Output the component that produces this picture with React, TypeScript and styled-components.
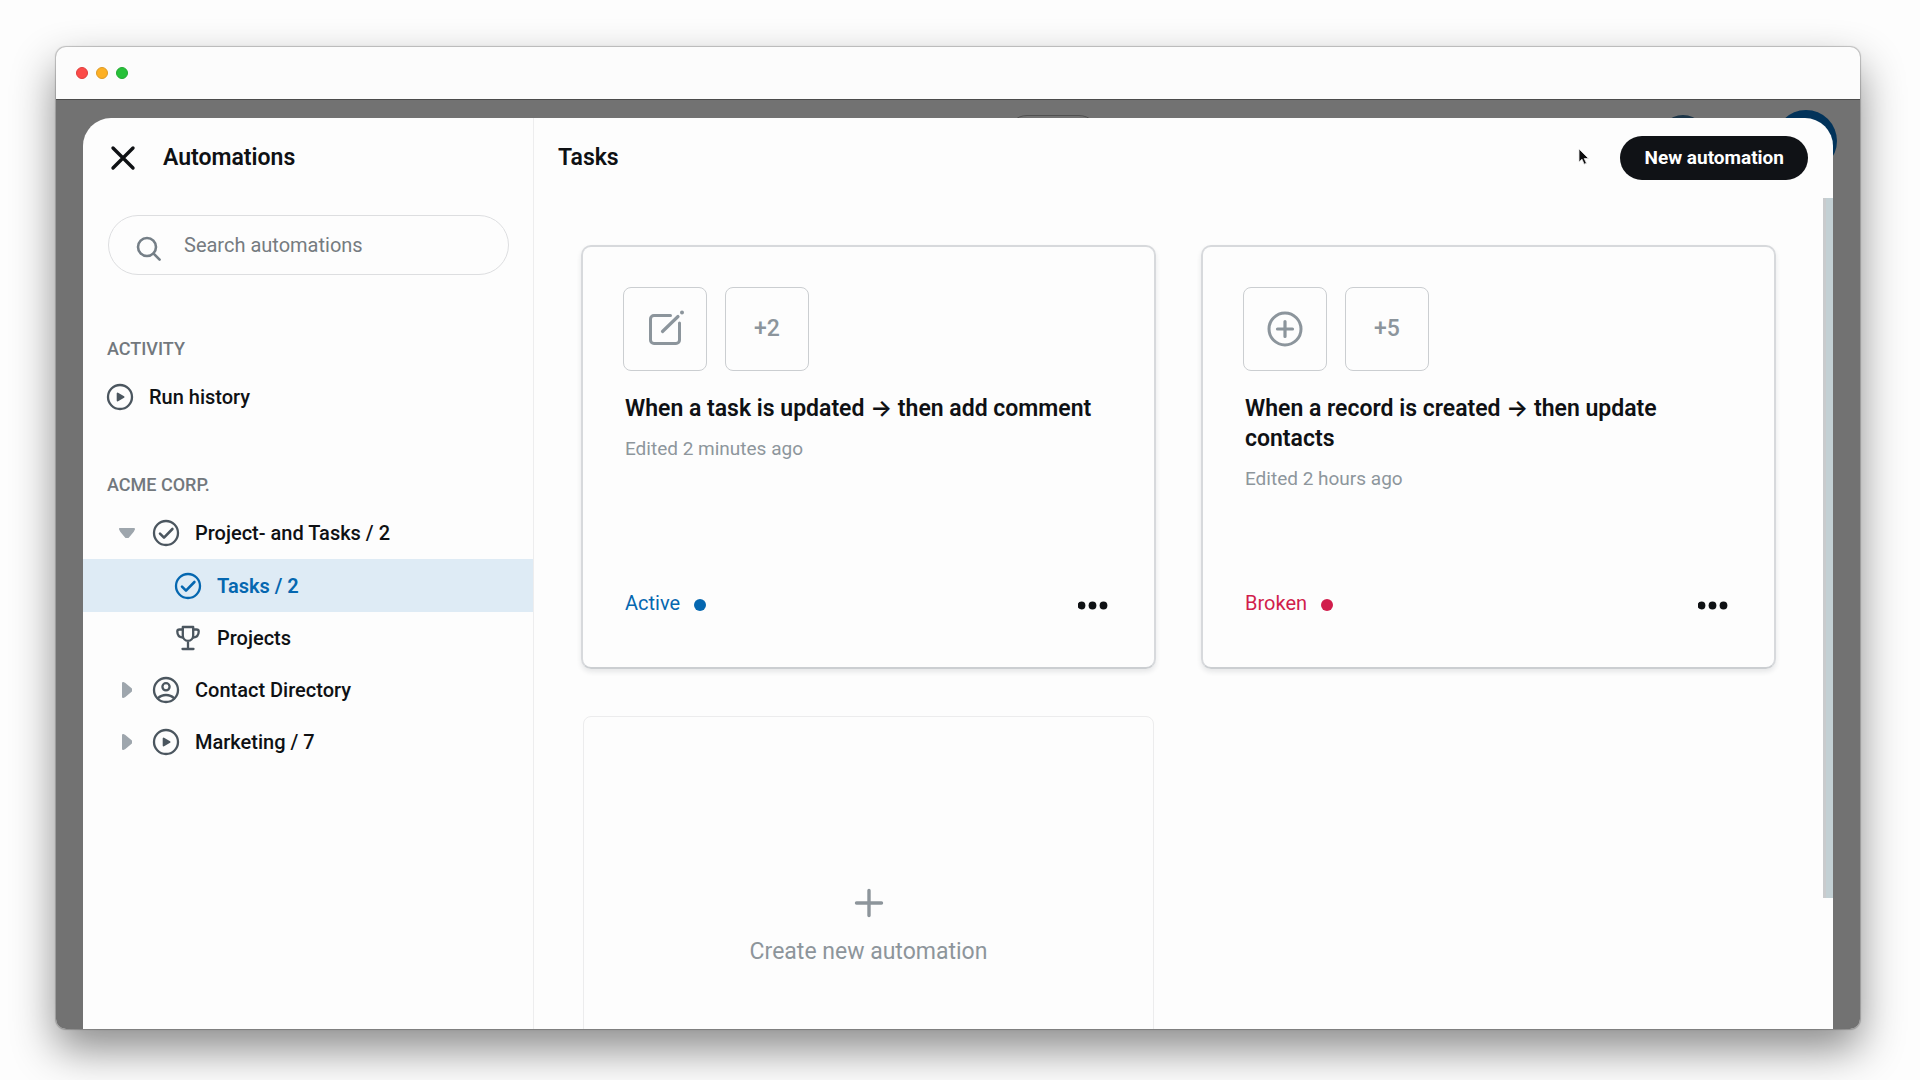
import React, { useState } from "react";
import styled, { createGlobalStyle } from "styled-components";

const GlobalStyle = createGlobalStyle`
  *, *::before, *::after { box-sizing: border-box; }
  html, body { margin: 0; min-height: 100%; background: #fdfdfd; }
  body { font-family: Roboto, Inter, "Liberation Sans", sans-serif; color: #0f1114; overflow: hidden; }
  button { font: inherit; color: inherit; background: none; border: 0; padding: 0; cursor: pointer; }
  h1, h2, h3, p, ul { margin: 0; padding: 0; font-weight: inherit; }
  ul { list-style: none; }
  svg { display: block; flex: none; }
`;

const Desktop = styled.div`
  display: flex;
  height: 100vh;
  padding: 47px 60px 51px 56px;
`;

const BrowserWindow = styled.div`
  display: flex;
  flex-direction: column;
  flex: 1;
  min-width: 0;
  overflow: hidden;
  border-radius: 10px;
  background: #fcfcfc;
  box-shadow: 0 0 1px 1px rgba(0, 0, 0, 0.22), 0 20px 44px rgba(0, 0, 0, 0.46);
`;

const TitleBar = styled.header`
  display: flex;
  align-items: center;
  gap: 8px;
  height: 53px;
  flex: none;
  padding-left: 20px;
  border-bottom: 1px solid #4b4b4b;
`;

const Light = styled.span<{ $color: string; $rim: string }>`
  width: 12px;
  height: 12px;
  border-radius: 50%;
  background: ${(p) => p.$color};
  border: 1px solid ${(p) => p.$rim};
`;

const Backdrop = styled.div`
  position: relative;
  display: flex;
  flex: 1;
  min-height: 0;
  padding: 18px 27px 0;
  background: #727272;
`;

const DimmedCircle = styled.span<{ $size: number; $top: number; $right: number; $color: string }>`
  position: absolute;
  top: ${(p) => p.$top}px;
  right: ${(p) => p.$right}px;
  width: ${(p) => p.$size}px;
  height: ${(p) => p.$size}px;
  border-radius: 50%;
  background: ${(p) => p.$color};
`;

const DimmedField = styled.span`
  position: absolute;
  top: 15px;
  left: 951px;
  width: 92px;
  height: 40px;
  border-radius: 20px;
  border: 1px solid #505050;
`;

const Modal = styled.div`
  position: relative;
  display: flex;
  flex: 1;
  min-width: 0;
  overflow: hidden;
  border-radius: 28px 28px 0 0;
  background: #fdfdfd;
`;

const Sidebar = styled.aside`
  width: 451px;
  flex: none;
  border-right: 1px solid #ededee;
`;

const SidebarHeader = styled.div`
  display: flex;
  align-items: center;
  gap: 27px;
  height: 80px;
  padding-left: 27px;
`;

const Heading = styled.h1`
  font-size: 23px;
  line-height: 28px;
  font-weight: 600;
`;

const SearchBox = styled.label`
  display: flex;
  align-items: center;
  gap: 22px;
  height: 60px;
  margin: 17px 24px 0 25px;
  padding: 0 27px;
  border: 1px solid #dddee0;
  border-radius: 30px;
`;

const SearchInput = styled.input`
  flex: 1;
  min-width: 0;
  padding: 0;
  border: 0;
  outline: 0;
  background: none;
  font: 400 20px/28px Roboto, "Liberation Sans", sans-serif;
  color: #0f1114;
  &::placeholder { color: #757b80; opacity: 1; }
`;

const SearchGlyph = styled.svg`
  margin-top: 8px;
`;

const SectionLabel = styled.h2`
  padding: 0 24px;
  font-size: 18px;
  line-height: 28px;
  font-weight: 500;
  color: #72787d;
`;

const Section = styled.section<{ $gap: number }>`
  margin-top: ${(p) => p.$gap}px;
`;

const NavList = styled.ul`
  padding-top: 8px;
`;

const NavRow = styled.button<{ $level: number; $active?: boolean }>`
  display: flex;
  align-items: center;
  width: 100%;
  height: ${(p) => (p.$active ? 53 : 52)}px;
  padding-left: ${(p) => [23, 35, 91][p.$level]}px;
  font-size: 20px;
  line-height: 28px;
  font-weight: ${(p) => (p.$active ? 600 : 500)};
  text-align: left;
  color: ${(p) => (p.$active ? "#0567b0" : "#0f1114")};
  background: ${(p) => (p.$active ? "#deebf5" : "transparent")};
`;

const NavIcon = styled.span<{ $active?: boolean }>`
  display: flex;
  width: 28px;
  margin-right: 15px;
  color: ${(p) => (p.$active ? "#0567b0" : "#4b565f")};
`;

const Caret = styled.span`
  display: flex;
  justify-content: center;
  width: 18px;
  margin-right: 16px;
  color: #9ea6ad;
`;

const Main = styled.main`
  display: flex;
  flex-direction: column;
  flex: 1;
  min-width: 0;
`;

const MainHeader = styled.div`
  display: flex;
  align-items: center;
  justify-content: space-between;
  height: 80px;
  flex: none;
  padding: 0 25px 0 24px;
`;

const PrimaryButton = styled.button`
  && {
    height: 44px;
    padding: 0 24px;
    border-radius: 22px;
    background: #101216;
    color: #fff;
    font-size: 19px;
    line-height: 28px;
    font-weight: 700;
  }
`;

const Scroller = styled.div`
  flex: 1;
  min-height: 0;
  overflow: hidden;
`;

const Grid = styled.div`
  display: grid;
  grid-template-columns: 1fr 1fr;
  gap: 47px 45px;
  padding: 47px 57px 0 47px;
`;

const Card = styled.article`
  display: flex;
  flex-direction: column;
  height: 424px;
  padding: 40px;
  border: 2px solid #d7d9dc;
  border-bottom-color: #cbced1;
  border-radius: 10px;
  box-shadow: 0 3px 5px rgba(30, 40, 50, 0.1);
`;

const Tiles = styled.div`
  display: flex;
  gap: 18px;
`;

const Tile = styled.span`
  display: flex;
  align-items: center;
  justify-content: center;
  width: 84px;
  height: 84px;
  border: 1px solid #cbced1;
  border-radius: 8px;
  font-size: 23px;
  line-height: 28px;
  font-weight: 500;
  color: #8c959c;
`;

const CardTitle = styled.h3`
  margin: 23px 0 0 2px;
  font-size: 23px;
  line-height: 30px;
  font-weight: 600;
`;

const Edited = styled.p`
  margin: 11px 0 0 2px;
  font-size: 19px;
  line-height: 28px;
  color: #8d969c;
`;

const CardFooter = styled.div`
  display: flex;
  align-items: center;
  justify-content: space-between;
  margin: auto 6px 8px 2px;
`;

const Status = styled.p<{ $color: string }>`
  display: flex;
  align-items: center;
  gap: 14px;
  font-size: 20px;
  line-height: 28px;
  color: ${(p) => p.$color};
  &::after {
    content: "";
    width: 12px;
    height: 12px;
    margin-top: 4px;
    border-radius: 50%;
    background: currentColor;
  }
`;

const CreateCard = styled.button`
  && {
    display: flex;
    flex-direction: column;
    align-items: center;
    justify-content: center;
    gap: 18px;
    height: 424px;
    margin: 0 2px;
    border: 1px solid #ececed;
    border-radius: 8px;
    font-size: 23px;
    line-height: 32px;
    color: #8d959b;
  }
`;

const ScrollThumb = styled.span`
  position: absolute;
  top: 80px;
  right: 0;
  width: 10px;
  height: 700px;
  background: #c3d0d4;
  border-left: 3px solid #c9cbcd;
`;

const Pointer = styled.svg`
  position: absolute;
  top: 30px;
  right: 243px;
`;

const stroke = { fill: "none", stroke: "currentColor", strokeLinecap: "round", strokeLinejoin: "round" } as const;

const CloseIcon = () => (
  <svg width="26" height="26" viewBox="0 0 26 26" {...stroke} strokeWidth="3.4">
    <path d="M3 3l20 20M23 3L3 23" />
  </svg>
);

const PlayIcon = () => (
  <svg width="28" height="28" viewBox="0 0 28 28" {...stroke} strokeWidth="2.3">
    <circle cx="14" cy="14" r="12" />
    <path d="M11.6 10.400v7.200l6-3.600z" fill="currentColor" strokeWidth="1.8" />
  </svg>
);

const CheckIcon = () => (
  <svg width="28" height="28" viewBox="0 0 28 28" {...stroke} strokeWidth="2.3">
    <circle cx="14" cy="14" r="12" />
    <path d="M8 14.6l4 4 8.4-8.6" strokeWidth="2.6" />
  </svg>
);

const PersonIcon = () => (
  <svg width="28" height="28" viewBox="0 0 28 28" {...stroke} strokeWidth="2.3">
    <circle cx="14" cy="14" r="12" />
    <circle cx="14" cy="10.8" r="3.6" />
    <path d="M5.8 22.4c2.2-2.3 5-3.4 8.2-3.4s6 1.1 8.2 3.4" />
  </svg>
);

const TrophyIcon = () => (
  <svg width="28" height="28" viewBox="0 0 28 28" {...stroke} strokeWidth="2.3">
    <path d="M8.8 3h10.4v8.5c0 2.900-2.300 5.300-5.200 5.300s-5.200-2.400-5.200-5.300zM14 17v8M8.500 25h11" />
    <path d="M8.8 5.500H5.500C3.800 5.500 3.300 6.300 3.300 7.500c0 3.400 1.700 5.700 5.500 6M19.200 5.500h3.300c1.700 0 2.200.8 2.200 2 0 3.400-1.700 5.700-5.500 6" />
  </svg>
);

const CaretDown = () => (
  <svg width="18" height="12" viewBox="0 0 18 12" {...stroke} fill="currentColor" strokeWidth="2">
    <path d="M2 2h14l-1 2-5 6H8L3 4z" />
  </svg>
);

const CaretRight = () => (
  <svg width="12" height="18" viewBox="0 0 12 18" {...stroke} fill="currentColor" strokeWidth="2">
    <path d="M2 2v14l2-1 6-5V8L4 3z" />
  </svg>
);

const EditIcon = () => (
  <svg width="40" height="40" viewBox="0 0 40 40" {...stroke} strokeWidth="3">
    <path d="M25.500 6.500H9a3.500 3.500 0 0 0-3.500 3.500v21A3.500 3.500 0 0 0 9 34.500h22a3.500 3.500 0 0 0 3.500-3.500V14" />
    <path d="M17.500 22.500L33 7.500" strokeWidth="3.200" />
    <circle cx="37" cy="3.500" r="2" fill="currentColor" stroke="none" />
  </svg>
);

const PlusCircleIcon = () => (
  <svg width="40" height="40" viewBox="0 0 40 40" {...stroke} strokeWidth="3">
    <circle cx="20" cy="20" r="16" />
    <path d="M12.5 20h15M20 12.5v15" strokeWidth="3.2" />
  </svg>
);

const PlusIcon = () => (
  <svg width="30" height="30" viewBox="0 0 30 30" {...stroke} strokeWidth="3.4">
    <path d="M2.5 15h25M15 2.5v25" />
  </svg>
);

const MoreIcon = () => (
  <svg width="30" height="32" viewBox="0 0 30 32" fill="currentColor">
    <circle cx="3.500" cy="18.500" r="3.900" />
    <circle cx="14.500" cy="18.500" r="3.900" />
    <circle cx="25.500" cy="18.500" r="3.900" />
  </svg>
);

type Item = {
  label: string;
  level: number;
  icon: React.ReactNode;
  caret?: React.ReactNode;
};

const tree: Item[] = [
  { label: "Project- and Tasks / 2", level: 1, icon: <CheckIcon />, caret: <CaretDown /> },
  { label: "Tasks / 2", level: 2, icon: <CheckIcon /> },
  { label: "Projects", level: 2, icon: <TrophyIcon /> },
  { label: "Contact Directory", level: 1, icon: <PersonIcon />, caret: <CaretRight /> },
  { label: "Marketing / 7", level: 1, icon: <PlayIcon />, caret: <CaretRight /> },
];

const automations = [
  {
    title: "When a task is updated → then add comment",
    edited: "Edited 2 minutes ago",
    more: "+2",
    icon: <EditIcon />,
    status: "Active",
    color: "#0567b0",
  },
  {
    title: "When a record is created → then update contacts",
    edited: "Edited 2 hours ago",
    more: "+5",
    icon: <PlusCircleIcon />,
    status: "Broken",
    color: "#d11d4c",
  },
];

export default function App() {
  const [selected, setSelected] = useState("Tasks / 2");

  return (
    <>
      <GlobalStyle />
      <Desktop>
        <BrowserWindow>
          <TitleBar>
            <Light $color="#fc4b48" $rim="#df3d3d" />
            <Light $color="#fdb024" $rim="#dd9a26" />
            <Light $color="#27c139" $rim="#22a932" />
          </TitleBar>
          <Backdrop>
            <DimmedField />
            <DimmedCircle $size={50} $top={15} $right={152} $color="#1b3447" />
            <DimmedCircle $size={62} $top={10} $right={23} $color="#02335a" />
            <Modal>
              <Sidebar>
                <SidebarHeader>
                  <button type="button" aria-label="Close">
                    <CloseIcon />
                  </button>
                  <Heading>Automations</Heading>
                </SidebarHeader>
                <SearchBox>
                  <SearchGlyph width="26" height="26" viewBox="0 0 26 26" fill="none" stroke="#757f87" strokeWidth="2.6" strokeLinecap="round">
                    <circle cx="11" cy="11" r="9" />
                    <path d="M17.6 17.6l6 6" />
                  </SearchGlyph>
                  <SearchInput type="search" placeholder="Search automations" aria-label="Search automations" />
                </SearchBox>
                <Section $gap={60}>
                  <SectionLabel>ACTIVITY</SectionLabel>
                  <NavList>
                    <li>
                      <NavRow type="button" $level={0}>
                        <NavIcon>
                          <PlayIcon />
                        </NavIcon>
                        Run history
                      </NavRow>
                    </li>
                  </NavList>
                </Section>
                <Section $gap={48}>
                  <SectionLabel>ACME CORP.</SectionLabel>
                  <NavList>
                    {tree.map((item) => {
                      const active = item.label === selected;
                      return (
                        <li key={item.label}>
                          <NavRow
                            type="button"
                            $level={item.level}
                            $active={active}
                            onClick={() => setSelected(item.label)}
                          >
                            {item.caret && <Caret>{item.caret}</Caret>}
                            <NavIcon $active={active}>{item.icon}</NavIcon>
                            {item.label}
                          </NavRow>
                        </li>
                      );
                    })}
                  </NavList>
                </Section>
              </Sidebar>
              <Main>
                <MainHeader>
                  <Heading as="h2">Tasks</Heading>
                  <PrimaryButton type="button">New automation</PrimaryButton>
                </MainHeader>
                <Scroller>
                  <Grid>
                    {automations.map((a) => (
                      <Card key={a.title}>
                        <Tiles>
                          <Tile>{a.icon}</Tile>
                          <Tile>{a.more}</Tile>
                        </Tiles>
                        <CardTitle>{a.title}</CardTitle>
                        <Edited>{a.edited}</Edited>
                        <CardFooter>
                          <Status $color={a.color}>{a.status}</Status>
                          <button type="button" aria-label="More options">
                            <MoreIcon />
                          </button>
                        </CardFooter>
                      </Card>
                    ))}
                    <CreateCard type="button">
                      <PlusIcon />
                      Create new automation
                    </CreateCard>
                  </Grid>
                </Scroller>
              </Main>
              <ScrollThumb />
              <Pointer width="12" height="18" viewBox="0 0 12 18">
                <path d="M1 1v13l3-2.8 2.2 5 2.2-1-2.2-4.7H10.5z" fill="#0c0c0e" stroke="#e6e6e6" strokeWidth="0.8" />
              </Pointer>
            </Modal>
          </Backdrop>
        </BrowserWindow>
      </Desktop>
    </>
  );
}
